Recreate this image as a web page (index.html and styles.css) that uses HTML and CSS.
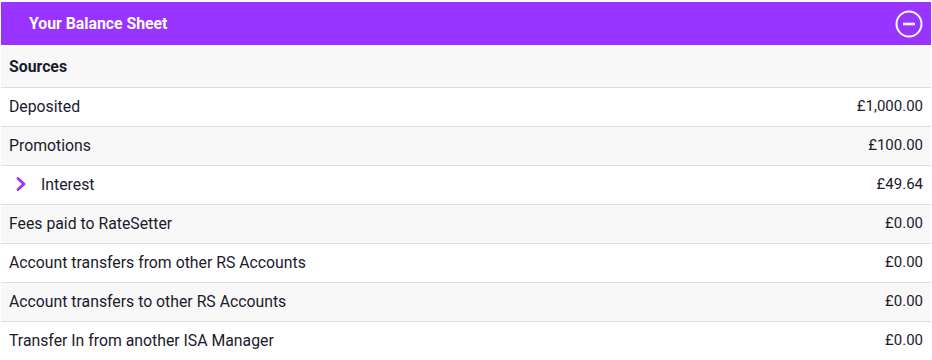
FILE: index.html
```html
<!DOCTYPE html>
<html lang="en">
<head>
<meta charset="utf-8">
<title>Your Balance Sheet</title>
<link rel="stylesheet" href="styles.css">
</head>
<body>
<div class="panel">
  <div class="panel-header">
    <span class="panel-title">Your Balance Sheet</span>
    <svg class="toggle" width="28" height="28" viewBox="0 0 28 28" aria-hidden="true">
      <circle cx="14" cy="14" r="12.5" fill="none" stroke="#fff" stroke-width="2"/>
      <line x1="8" y1="14" x2="20" y2="14" stroke="#fff" stroke-width="2.6"/>
    </svg>
  </div>
  <div class="rows">
    <div class="row alt head"><span class="label">Sources</span></div>
    <div class="row"><span class="label">Deposited</span><span class="amount">£1,000.00</span></div>
    <div class="row alt"><span class="label">Promotions</span><span class="amount">£100.00</span></div>
    <div class="row"><span class="label expand"><svg class="chev" width="12" height="16" viewBox="0 0 12 16" aria-hidden="true"><path d="M3 2.5 L9 8 L3 13.5" fill="none" stroke="#9933ff" stroke-width="2.8" stroke-linecap="round" stroke-linejoin="round"/></svg>Interest</span><span class="amount">£49.64</span></div>
    <div class="row alt"><span class="label">Fees paid to RateSetter</span><span class="amount">£0.00</span></div>
    <div class="row"><span class="label">Account transfers from other RS Accounts</span><span class="amount">£0.00</span></div>
    <div class="row alt"><span class="label">Account transfers to other RS Accounts</span><span class="amount">£0.00</span></div>
    <div class="row"><span class="label">Transfer In from another ISA Manager</span><span class="amount">£0.00</span></div>
  </div>
</div>
</body>
</html>
```
FILE: styles.css
```css
html, body {
  margin: 0;
  padding: 0;
  background: #fff;
}
body {
  font-family: Roboto, "Liberation Sans", sans-serif;
  color: #1c1a2e;
  font-size: 15px;
}
.panel {
  padding: 2px 1px 0 1px;
}
.panel-header {
  height: 43px;
  background: #9933ff;
  display: flex;
  align-items: center;
  justify-content: space-between;
  padding: 0 8px 0 28px;
}
.panel-title {
  color: #fff;
  font-weight: 700;
  font-size: 15.8px;
}
.toggle {
  display: block;
}
.rows {
  margin-top: 2px;
}
.row {
  height: 38px;
  box-sizing: content-box;
  display: flex;
  align-items: center;
  justify-content: space-between;
  padding: 0 8px;
  border-bottom: 1px solid #dedede;
  background: #fff;
}
.row > span {
  position: relative;
  top: -1px;
}
.row.alt {
  background: #f8f8f8;
}
.row.head {
  height: 40px;
  font-weight: 700;
}
.label {
  font-size: 15.8px;
}
.amount {
  font-size: 15px;
}
.expand {
  display: flex;
  align-items: center;
}
.chev {
  margin: 0 14px 0 6px;
}
```
